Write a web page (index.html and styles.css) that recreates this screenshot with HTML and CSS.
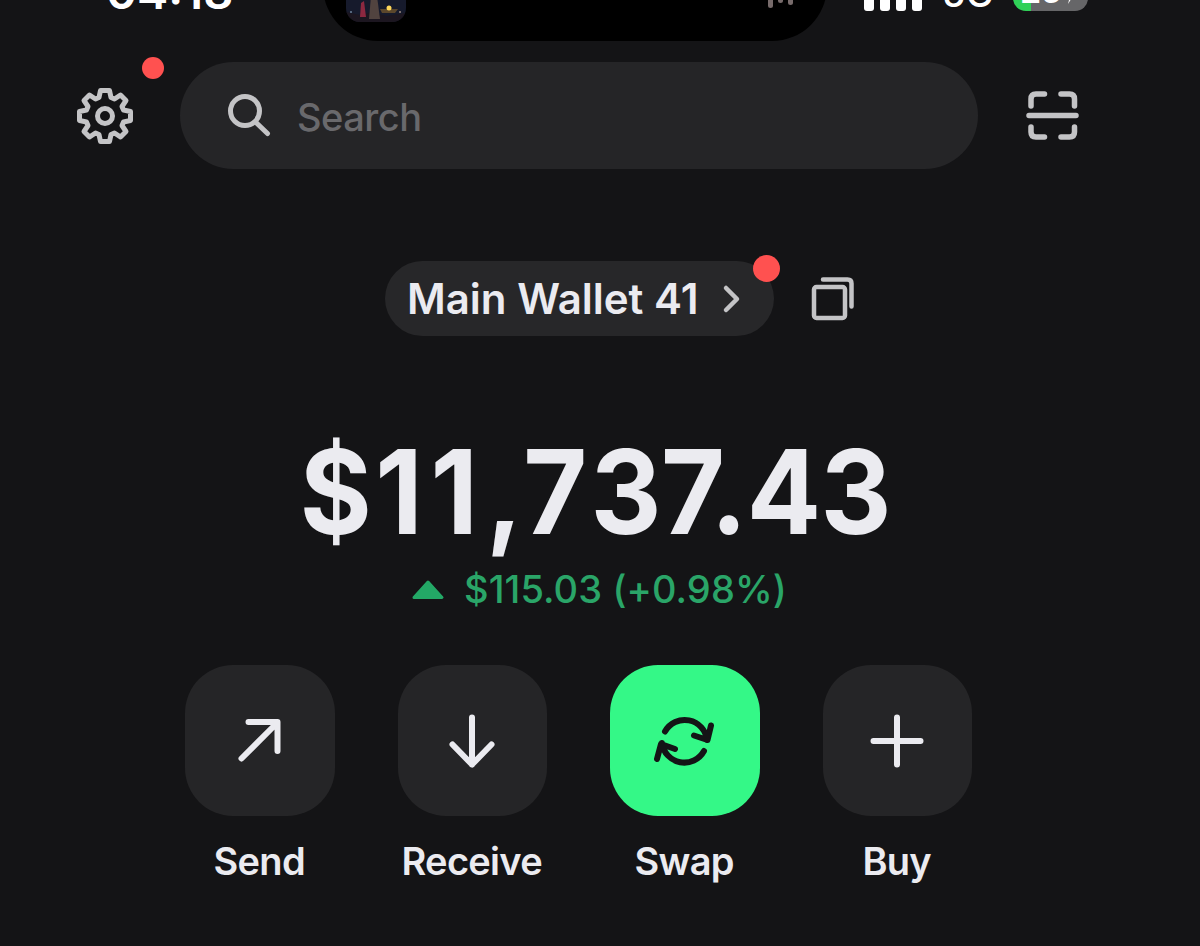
FILE: index.html
```html
<!DOCTYPE html>
<html lang="en">
<head>
    <meta charset="UTF-8">
    <meta name="viewport" content="width=device-width, initial-scale=1.0">
    <title>Wallet</title>
    <link rel="stylesheet" href="styles.css">
</head>
<body>
    <div class="statusbar">
        <div class="time">04:18</div>
        <div class="island">
            <div class="cover">
                <svg width="60" height="40" viewBox="0 0 60 40">
                    <rect width="60" height="40" fill="#161a2c"/>
                    <path d="M0 30 L14 33 L26 30 L40 34 L60 31 V40 H0 Z" fill="#1c1620"/>
                    <path d="M23 37 L25 14 H31 L34 37 Z" fill="#51433f"/>
                    <path d="M14 35 L15 21 L18 19 L20 35 Z" fill="#8c2840"/>
                    <path d="M34 27 H52 L49 31 H36 Z" fill="#5b472c"/>
                    <circle cx="43" cy="26" r="2.5" fill="#ffd75a"/>
                    <circle cx="54" cy="30" r="1" fill="#9c8a80"/>
                    <circle cx="5" cy="30" r="1" fill="#6b8098"/>
                </svg>
            </div>
            <div class="wave">
                <i class="tall"></i>
                <i></i>
                <i class="mid"></i>
            </div>
        </div>
        <div class="status-right">
            <div class="signal"><i></i><i></i><i></i><i></i></div>
            <div class="network">5G</div>
            <div class="battery">
                <span>26</span>
                <svg width="12" height="20" viewBox="0 0 12 20">
                    <path d="M8 1 L1 11 H6 L4 19 L11 8 H6 Z"/>
                </svg>
            </div>
        </div>
    </div>

    <div class="header">
        <button class="icon-button settings">
            <svg width="60" height="60" viewBox="-30 -30 60 60">
                <path d="M-4.5 -25.5 H4.5 L6 -18.5 L9.5 -17 L15.5 -21 L21 -15.5 L17 -9.5 L18.5 -6 L25.5 -4.5 V4.5 L18.5 6 L17 9.5 L21 15.5 L15.5 21 L9.5 17 L6 18.5 L4.5 25.5 H-4.5 L-6 18.5 L-9.5 17 L-15.5 21 L-21 15.5 L-17 9.5 L-18.5 6 L-25.5 4.5 V-4.5 L-18.5 -6 L-17 -9.5 L-21 -15.5 L-15.5 -21 L-9.5 -17 L-6 -18.5 Z"/>
                <circle r="7.5"/>
            </svg>
            <span class="dot"></span>
        </button>
        <div class="search">
            <svg width="48" height="48" viewBox="0 0 48 48">
                <circle cx="21" cy="19" r="14.5"/>
                <path d="M31.5 30 L43.5 41.5"/>
            </svg>
            <span>Search</span>
        </div>
        <button class="icon-button scan">
            <svg width="56" height="56" viewBox="0 0 56 56">
                <path d="M6 18 V11 Q6 6 11 6 H19.5 M36 6 H44.5 Q49.5 6 49.5 11 V18 M6 39 V44 Q6 49 11 49 H19.5 M36 49 H44.5 Q49.5 49 49.5 44 V39 M4 27.5 H51"/>
            </svg>
        </button>
    </div>

    <div class="wallet">
        <button class="wallet-name">
            <span>Main Wallet 41</span>
            <svg width="20" height="32" viewBox="0 0 20 32">
                <path d="M4 5 L15 16 L4 27"/>
            </svg>
            <span class="dot"></span>
        </button>
        <button class="icon-button copy">
            <svg width="48" height="48" viewBox="0 0 48 48">
                <rect x="5" y="12" width="31" height="31" rx="2.5"/>
                <path d="M14 4.5 H38.5 Q42.5 4.5 42.5 8.5 V31.5"/>
            </svg>
        </button>
    </div>

    <div class="balance"><span class="currency">$</span><span class="thousands">11</span><span class="currency">,7</span>37.43</div>
    <div class="change">
        <svg width="34" height="22" viewBox="0 0 34 22">
            <path d="M17 3 L31 18.5 H3 Z"/>
        </svg>
        <span>$115.03 (+0.98%)</span>
    </div>

    <div class="actions">
        <div class="action">
            <button class="tile">
                <svg width="70" height="70" viewBox="0 0 70 70">
                    <path d="M16.5 52.5 L52 17 M23.5 16 H52.5 V45"/>
                </svg>
            </button>
            <span>Send</span>
        </div>
        <div class="action">
            <button class="tile">
                <svg width="70" height="70" viewBox="0 0 70 70">
                    <path d="M35 11.5 V58.5 M15.5 38.5 L35 58.5 L54.5 38.5"/>
                </svg>
            </button>
            <span>Receive</span>
        </div>
        <div class="action">
            <button class="tile tile-active">
                <svg width="70" height="70" viewBox="0 0 70 70">
                    <path d="M15 25.5 A22.5 22.5 0 0 1 57 34 M61 19.5 L57.5 34 L44 29.5 M54 45 A22.5 22.5 0 0 1 12 37 M7 53 L11 38 L25 43"/>
                </svg>
            </button>
            <span>Swap</span>
        </div>
        <div class="action">
            <button class="tile">
                <svg width="70" height="70" viewBox="0 0 70 70">
                    <path d="M35 11.5 V58.5 M11.5 35 H58.5"/>
                </svg>
            </button>
            <span>Buy</span>
        </div>
    </div>
</body>
</html>
```
FILE: styles.css
```css
* {
    box-sizing: border-box;
}

body {
    margin: 0;
    height: 946px;
    overflow: hidden;
    background-color: #141416;
    color: #ebebf0;
    font-family: 'Inter', sans-serif;
}

button {
    border: none;
    padding: 0;
    background: none;
    color: inherit;
    font-family: inherit;
    cursor: pointer;
}

svg {
    display: block;
    flex: none;
    fill: none;
    stroke: #c4c4c6;
    stroke-width: 5.5;
    stroke-linecap: round;
    stroke-linejoin: round;
}

.dot {
    position: absolute;
    border-radius: 50%;
    background-color: #ff5150;
}

/* status bar, cut by the top edge */
.statusbar {
    display: flex;
    align-items: flex-end;
    height: 41px;
    padding-left: 106px;
    color: #fff;
    font-weight: 600;
}

.time {
    flex: none;
    width: 217px;
    height: 74px;
    font-size: 47px;
    line-height: 50px;
}

.island {
    display: flex;
    flex: none;
    justify-content: space-between;
    align-items: flex-start;
    width: 504px;
    height: 110px;
    padding: 51px 34px 0 23px;
    border-radius: 55px;
    background-color: #000;
}

.cover {
    width: 60px;
    height: 40px;
    border-radius: 0 0 14px 14px;
    overflow: hidden;
}

.cover svg {
    stroke: none;
}

.wave {
    display: flex;
    align-items: flex-start;
    gap: 5px;
    padding-top: 8px;
}

.wave i {
    width: 5px;
    height: 13px;
    border-radius: 3px;
    background-color: #776b6b;
}

.wave .tall {
    height: 18px;
}

.wave .mid {
    height: 15px;
}

.status-right {
    display: flex;
    flex: none;
    align-items: flex-end;
    height: 70px;
    padding: 0 0 30px 37px;
}

.signal {
    display: flex;
    gap: 6px;
}

.signal i {
    width: 10px;
    height: 16px;
    border-radius: 3px;
    background-color: #fff;
}

.network {
    width: 51px;
    height: 38px;
    margin-left: 20px;
    font-size: 38px;
    font-weight: 500;
    line-height: 40px;
}

.battery {
    display: flex;
    align-items: flex-end;
    width: 75px;
    height: 38px;
    margin-left: 20px;
    padding-left: 7px;
    border-radius: 13px;
    background: linear-gradient(90deg, #30d158 18px, #666668 18px);
    font-size: 34px;
    line-height: 40px;
    letter-spacing: -1px;
}

.battery svg {
    margin: 0 0 6px 3px;
    fill: #fff;
    stroke: none;
}

.header {
    display: flex;
    align-items: center;
    height: 107px;
    margin-top: 21px;
    padding-left: 75px;
}

.icon-button {
    position: relative;
    flex: none;
}

.settings {
    width: 60px;
}

.settings svg {
    stroke-width: 5;
}

.settings .dot {
    top: -29px;
    right: -29px;
    width: 22px;
    height: 22px;
}

.search {
    display: flex;
    flex: none;
    align-items: center;
    width: 798px;
    height: 107px;
    margin: 0 47px 0 45px;
    padding-left: 44px;
    border-radius: 54px;
    background-color: #252527;
    color: #69696c;
    font-size: 38px;
    font-weight: 500;
    letter-spacing: -0.5px;
}

.search svg {
    margin-right: 25px;
    stroke-width: 5;
}

.search span {
    padding-top: 2px;
}

.wallet {
    display: flex;
    align-items: center;
    height: 75px;
    margin: 92px 0 0 385px;
}

.wallet-name {
    position: relative;
    display: flex;
    align-items: center;
    width: 389px;
    height: 75px;
    padding-left: 22px;
    border-radius: 38px;
    background-color: #272729;
    font-size: 42px;
    font-weight: 600;
}

.wallet-name svg {
    margin-left: 24px;
    stroke-width: 4.5;
}

.wallet-name .dot {
    top: -6px;
    right: -6px;
    width: 27px;
    height: 27px;
}

.copy {
    margin-left: 35px;
}

.copy svg {
    stroke-width: 4.5;
}

.balance {
    height: 146px;
    margin-top: 82px;
    padding-left: 319px;
    font-size: 117px;
    font-weight: 700;
    line-height: 148px;
    letter-spacing: -0.6px;
    white-space: nowrap;
    transform: scaleX(0.94);
    transform-origin: left;
}

.balance .currency {
    letter-spacing: 3.5px;
}

.balance .thousands {
    letter-spacing: 8.5px;
}

.change {
    display: flex;
    align-items: center;
    height: 48px;
    margin-top: 1px;
    padding-left: 411px;
    color: #2aa568;
    font-size: 38px;
    font-weight: 500;
    letter-spacing: 0.1px;
    white-space: nowrap;
}

.change svg {
    margin: 2px 19px 0 0;
    fill: #23a866;
    stroke: #23a866;
    stroke-width: 3;
}

.actions {
    display: flex;
    gap: 63px;
    margin-top: 52px;
    padding-left: 185px;
}

.action {
    display: flex;
    flex-direction: column;
    align-items: center;
    width: 149.5px;
    font-size: 38px;
    font-weight: 600;
    letter-spacing: -0.7px;
}

.action span {
    margin-top: 22px;
    padding-right: 1px;
    line-height: 47px;
}

.tile {
    display: flex;
    justify-content: center;
    align-items: center;
    width: 149.5px;
    height: 151px;
    border-radius: 48px;
    background-color: #252527;
}

.tile svg {
    stroke: #ebebf0;
    stroke-width: 6;
}

.tile-active {
    background-color: #34f887;
}

.tile-active svg {
    stroke: #141416;
}
```
